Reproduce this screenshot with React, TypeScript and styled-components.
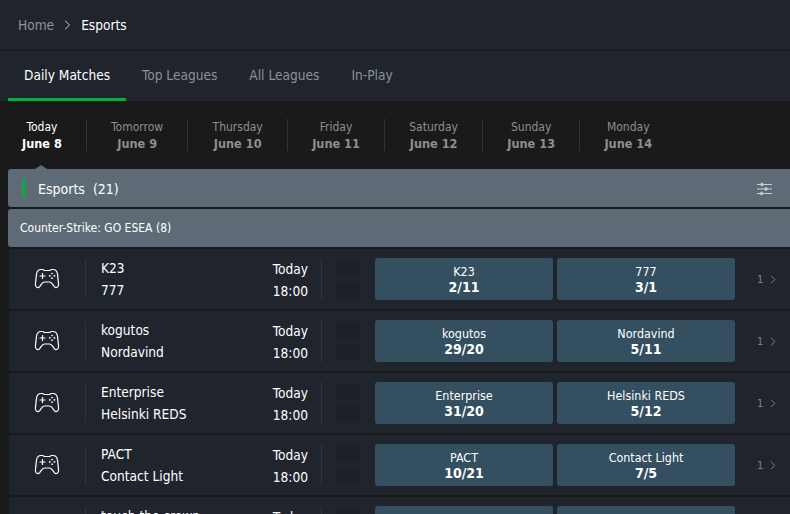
import styled, { createGlobalStyle } from "styled-components";

const GlobalStyle = createGlobalStyle`
    html, body {
        margin: 0;
        height: 514px;
        overflow: hidden;
        background: #1a1a1a;
        font-family: "DejaVu Sans", "Liberation Sans", sans-serif;
        font-stretch: condensed;
    }
    * { box-sizing: border-box; }
`;

const Breadcrumb = styled.nav`
    height: 51px;
    padding-left: 18px;
    display: flex;
    align-items: center;
    background: #20252d;
    border-bottom: 1px solid #15181c;
    font-size: 13.6px;
`;
const Crumb = styled.span<{ $active?: boolean }>`
    color: ${(p) => (p.$active ? "#ffffff" : "#909396")};
`;
const CrumbArrow = styled.svg`
    width: 7px;
    height: 10px;
    margin: 0 10px 0 10px;
`;

const TabBar = styled.div`
    height: 50px;
    padding-left: 8px;
    display: flex;
    background: #20252d;
`;
const Tab = styled.div<{ $active?: boolean }>`
    display: flex;
    align-items: center;
    padding: 0 16px;
    font-size: 13.6px;
    color: ${(p) => (p.$active ? "#ffffff" : "#8e9195")};
    border-bottom: 3px solid ${(p) => (p.$active ? "#00b140" : "transparent")};
`;

const DateBar = styled.div`
    position: relative;
    height: 68px;
    padding: 18px 0 0 22px;
    display: flex;
    align-items: flex-start;
    background: #1a1a1a;
`;
const DateItem = styled.div<{ $active?: boolean }>`
    height: 32px;
    padding: 0 24.2px;
    display: flex;
    flex-direction: column;
    align-items: center;
    justify-content: center;
    gap: 1px;
    font-size: 12px;
    line-height: 16px;
    color: ${(p) => (p.$active ? "#ffffff" : "#8e8e8e")};
    border-right: 1px solid #2a3540;
    &:first-child {
        padding: 0 24px 0 0;
    }
    &:last-child {
        border-right: 0;
    }
    b {
        font-size: 12.6px;
        font-weight: 700;
    }
`;
const DatePointer = styled.div`
    position: absolute;
    left: 35px;
    bottom: 0;
    width: 0;
    height: 0;
    border-left: 6px solid transparent;
    border-right: 6px solid transparent;
    border-bottom: 4px solid #5e6b76;
`;

const Content = styled.div`
    padding-left: 8px;
    display: flex;
    flex-direction: column;
    gap: 2px;
`;
const SportHeader = styled.div`
    height: 38px;
    padding: 2px 18px 0 14px;
    display: flex;
    align-items: center;
    background: #5e6b76;
    border-radius: 3px 0 0 3px;
    color: #ffffff;
    font-size: 14px;
`;
const GreenMark = styled.span`
    width: 3px;
    height: 18px;
    margin: -2px 13px 0 0;
    background: #00b140;
`;
const SportTitle = styled.span`
    flex: 1;
    white-space: pre;
`;
const LeagueHeader = styled.div`
    height: 38px;
    padding-left: 12px;
    display: flex;
    align-items: center;
    background: #5e6b76;
    border-radius: 3px 0 0 3px;
    color: #ffffff;
    font-size: 12px;
`;

const MatchRow = styled.div`
    flex: none;
    height: 60px;
    margin-left: 1px;
    display: flex;
    align-items: center;
    background: #20252d;
    border-radius: 3px 0 0 3px;
    color: #ffffff;
`;
const IconCell = styled.div`
    width: 77px;
    height: 38px;
    display: flex;
    align-items: center;
    justify-content: center;
    border-right: 1px solid #2c3540;
`;
const Teams = styled.div`
    width: 160px;
    padding-left: 15px;
    display: flex;
    flex-direction: column;
    gap: 4px;
    font-size: 13.6px;
    line-height: 18px;
`;
const TimeCell = styled.div`
    width: 76px;
    height: 42px;
    padding: 2px 13px 0 0;
    display: flex;
    flex-direction: column;
    justify-content: center;
    gap: 4px;
    text-align: right;
    font-size: 13.6px;
    line-height: 18px;
    border-right: 1px solid #2c3540;
`;
const Blanks = styled.div`
    width: 24px;
    margin: 0 15px 0 14px;
    display: flex;
    flex-direction: column;
    gap: 6px;
`;
const Blank = styled.div`
    height: 16px;
    background: #1d2127;
    border-radius: 3px;
`;
const Odds = styled.div`
    display: flex;
    gap: 4px;
`;
const OddButton = styled.div`
    width: 178px;
    height: 42px;
    padding-top: 1px;
    display: flex;
    flex-direction: column;
    align-items: center;
    justify-content: center;
    background: #334f60;
    border-radius: 3px;
    font-size: 12.4px;
    line-height: 14px;
    b {
        font-size: 14px;
        line-height: 16px;
        font-weight: 700;
    }
`;
const More = styled.div`
    margin-left: 22px;
    display: flex;
    align-items: center;
    gap: 7px;
    color: #7d8185;
    font-size: 11px;
`;
const MoreArrow = styled.svg`
    width: 6px;
    height: 9px;
`;

const dates = [
    ["Today", "June 8"],
    ["Tomorrow", "June 9"],
    ["Thursday", "June 10"],
    ["Friday", "June 11"],
    ["Saturday", "June 12"],
    ["Sunday", "June 13"],
    ["Monday", "June 14"],
];

const matches = [
    { home: "K23", away: "777", homeOdd: "2/11", awayOdd: "3/1" },
    { home: "kogutos", away: "Nordavind", homeOdd: "29/20", awayOdd: "5/11" },
    { home: "Enterprise", away: "Helsinki REDS", homeOdd: "31/20", awayOdd: "5/12" },
    { home: "PACT", away: "Contact Light", homeOdd: "10/21", awayOdd: "7/5" },
    { home: "touch the crown", away: "Unity", homeOdd: "4/6", awayOdd: "11/10" },
];

function GamepadIcon() {
    return (
        <svg width="26" height="22" viewBox="0 0 26 22" fill="none" stroke="#fff" strokeWidth="1.2" strokeLinejoin="round" strokeLinecap="round">
            <path d="M7 1.5h1.6c.8 0 1.2 1 2 1h4.800c.8 0 1.200-1 2-1H19c2.600 0 4 1.700 4.500 4.600l1.100 10c.3 3-2.500 4.600-4.300 2.500-1.600-2-2.600-4.600-4.600-4.600H10.300c-2 0-3 2.600-4.600 4.600-1.800 2.100-4.600.5-4.300-2.500l1.100-10C3 3.200 4.400 1.500 7 1.500z" />
            <path d="M8.500 5.500v5M6 8h5" />
            <circle cx="18" cy="5.600" r=".6" fill="#fff" strokeWidth=".5" />
            <circle cx="18" cy="10.200" r=".6" fill="#fff" strokeWidth=".5" />
            <circle cx="15.700" cy="7.900" r=".6" fill="#fff" strokeWidth=".5" />
            <circle cx="20.300" cy="7.900" r=".6" fill="#fff" strokeWidth=".5" />
        </svg>
    );
}

function FilterIcon() {
    return (
        <svg width="15" height="14" viewBox="0 0 15 14" fill="#c6ccd1" stroke="#c6ccd1" strokeWidth="1">
            <path d="M0 2.500h15M0 7h15M0 11.500h15" />
            <circle cx="5" cy="2.500" r="1.300" />
            <circle cx="9" cy="7" r="1.300" />
            <circle cx="4.500" cy="11.500" r="1.300" />
        </svg>
    );
}

export default function App() {
    return (
        <>
            <GlobalStyle />
            <Breadcrumb>
                <Crumb>Home</Crumb>
                <CrumbArrow viewBox="0 0 7 10" fill="none" stroke="#c9cbce" strokeWidth="1">
                    <path d="M1 .7 5.500 5 1 9.300" />
                </CrumbArrow>
                <Crumb $active>Esports</Crumb>
            </Breadcrumb>
            <TabBar>
                <Tab $active>Daily Matches</Tab>
                <Tab>Top Leagues</Tab>
                <Tab>All Leagues</Tab>
                <Tab>In-Play</Tab>
            </TabBar>
            <DateBar>
                {dates.map(([day, date], i) => (
                    <DateItem key={day} $active={i === 0}>
                        <span>{day}</span>
                        <b>{date}</b>
                        {i === 0 && <DatePointer />}
                    </DateItem>
                ))}
            </DateBar>
            <Content>
                <SportHeader>
                    <GreenMark />
                    <SportTitle>Esports  (21)</SportTitle>
                    <FilterIcon />
                </SportHeader>
                <LeagueHeader>Counter-Strike: GO ESEA (8)</LeagueHeader>
                {matches.map((m) => (
                    <MatchRow key={m.home}>
                        <IconCell>
                            <GamepadIcon />
                        </IconCell>
                        <Teams>
                            <span>{m.home}</span>
                            <span>{m.away}</span>
                        </Teams>
                        <TimeCell>
                            <span>Today</span>
                            <span>18:00</span>
                        </TimeCell>
                        <Blanks>
                            <Blank />
                            <Blank />
                        </Blanks>
                        <Odds>
                            <OddButton>
                                <span>{m.home}</span>
                                <b>{m.homeOdd}</b>
                            </OddButton>
                            <OddButton>
                                <span>{m.away}</span>
                                <b>{m.awayOdd}</b>
                            </OddButton>
                        </Odds>
                        <More>
                            1
                            <MoreArrow viewBox="0 0 6 9" fill="none" stroke="#7d8185" strokeWidth="1">
                                <path d="M1 .7 4.800 4.500 1 8.300" />
                            </MoreArrow>
                        </More>
                    </MatchRow>
                ))}
            </Content>
        </>
    );
}
